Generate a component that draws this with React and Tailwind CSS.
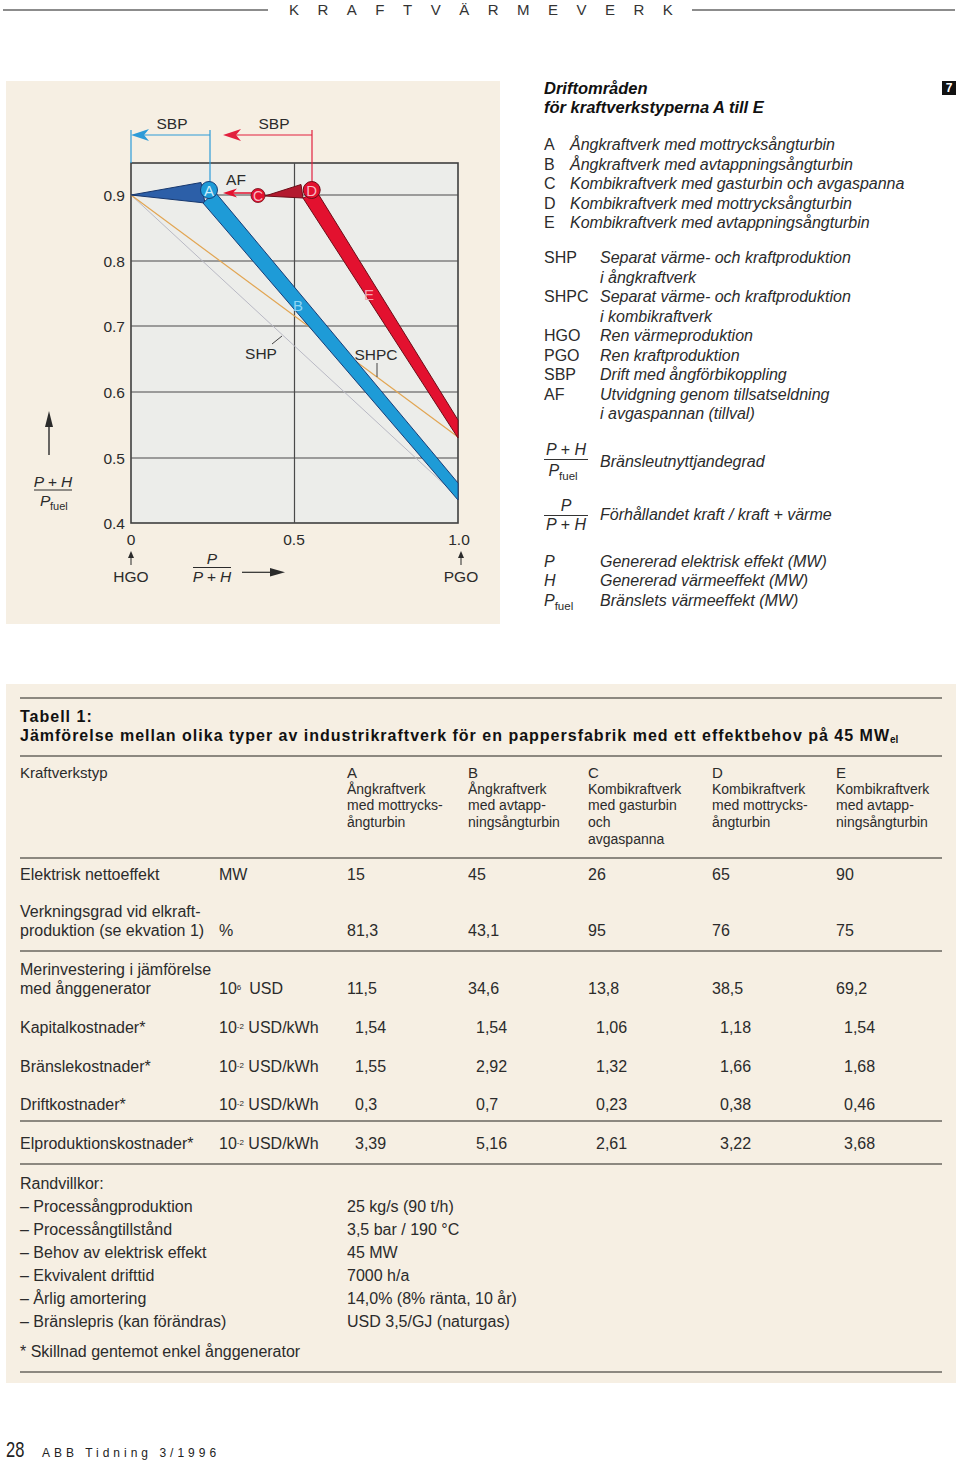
import React, { Fragment } from "react";

function Chart() {
  const dark = "#2b2b2b";
  return (
    <svg width="494" height="543" viewBox="6 81 494 543" className="block" fontFamily='"Liberation Sans", Arial, sans-serif'>
      <rect x="131" y="163" width="327" height="360" fill="#ecedea" stroke="#3f3f3f" strokeWidth="1.6" />
      {[195, 261, 326, 392, 458].map((y) => (
        <line key={y} x1="131" x2="458" y1={y} y2={y} stroke="#4a4a4a" strokeWidth="1.2" />
      ))}
      <line x1="294.5" x2="294.5" y1="163" y2="523" stroke="#4a4a4a" strokeWidth="1.2" />

      <line x1="131" y1="195" x2="458" y2="497" stroke="#b9b9c4" strokeWidth="1" />
      <line x1="131" y1="195" x2="458" y2="437" stroke="#e2a552" strokeWidth="1.2" />

      <g stroke="#2d9bd8" strokeWidth="1.2" fill="none">
        <line x1="131" y1="130" x2="131" y2="163" />
        <line x1="136" y1="135" x2="210" y2="135" />
        <line x1="210" y1="130" x2="210" y2="182" />
      </g>
      <path d="M131,135 L149,129 L144,135 L149,141 Z" fill="#2d9bd8" />
      <g stroke="#e2203e" strokeWidth="1.2" fill="none">
        <line x1="228" y1="135" x2="312" y2="135" />
        <line x1="312" y1="130" x2="312" y2="182" />
      </g>
      <path d="M223,135 L241,129 L236,135 L241,141 Z" fill="#e2203e" />
      <text x="172" y="129" textAnchor="middle" fontSize="15.5" fill={dark}>SBP</text>
      <text x="274" y="129" textAnchor="middle" fontSize="15.5" fill={dark}>SBP</text>

      <polygon points="131,195 201,182.5 205,203" fill="#2c5fa8" stroke="#17386e" strokeWidth="1" strokeLinejoin="round" />
      <polygon points="203,203 215,192 458,483 458,500" fill="#1e9bd7" stroke="#183e78" strokeWidth="1" />
      <circle cx="209" cy="190" r="8.5" fill="#1e9bd7" stroke="#183e78" strokeWidth="1" />
      <text x="209" y="195.5" textAnchor="middle" fontSize="15" fill="#cdeefb">A</text>
      <text x="298" y="310.5" textAnchor="middle" fontSize="15" fill="#8fd6f5">B</text>

      <polygon points="265,196 301,184.5 303,198" fill="#b3192e" stroke="#6d0c17" strokeWidth="1" strokeLinejoin="round" />
      <polygon points="303,198 317,192 458,420 458,438" fill="#e3112f" stroke="#6d0c17" strokeWidth="1" />
      <circle cx="311.7" cy="190" r="8.5" fill="#e3112f" stroke="#6d0c17" strokeWidth="1" />
      <text x="311.7" y="195.5" textAnchor="middle" fontSize="15" fill="#f8b9c3">D</text>
      <text x="369" y="299.5" textAnchor="middle" fontSize="15" fill="#f5a5b2">E</text>

      <line x1="229" y1="193" x2="252" y2="193" stroke="#e3112f" strokeWidth="1.5" />
      <path d="M223,193 L237,188.5 L233,193 L237,197.5 Z" fill="#e3112f" />
      <circle cx="258" cy="195.5" r="7" fill="#e3112f" stroke="#6d0c17" strokeWidth="0.8" />
      <text x="258" y="200.5" textAnchor="middle" fontSize="14" fill="#f8b9c3">C</text>
      <text x="236" y="184.5" textAnchor="middle" fontSize="15.5" fill={dark}>AF</text>

      <line x1="272" y1="344" x2="282" y2="336" stroke="#444" strokeWidth="1" />
      <text x="261" y="358.5" textAnchor="middle" fontSize="15.5" fill={dark}>SHP</text>
      <line x1="377" y1="363" x2="377" y2="377" stroke="#444" strokeWidth="1" />
      <text x="376" y="359.5" textAnchor="middle" fontSize="15.5" fill={dark}>SHPC</text>

      {[
        ["0.9", 195],
        ["0.8", 261],
        ["0.7", 326],
        ["0.6", 392],
        ["0.5", 458],
        ["0.4", 523],
      ].map(([t, y]) => (
        <text key={t} x="125" y={y + 5.5} textAnchor="end" fontSize="15.5" fill={dark}>{t}</text>
      ))}

      <text x="131" y="545" textAnchor="middle" fontSize="15.5" fill={dark}>0</text>
      <text x="294" y="545" textAnchor="middle" fontSize="15.5" fill={dark}>0.5</text>
      <text x="459" y="545" textAnchor="middle" fontSize="15.5" fill={dark}>1.0</text>
      <line x1="131" y1="557" x2="131" y2="565" stroke={dark} strokeWidth="1" />
      <path d="M131,551 L128,558 L134,558 Z" fill={dark} />
      <line x1="461" y1="557" x2="461" y2="565" stroke={dark} strokeWidth="1" />
      <path d="M461,551 L458,558 L464,558 Z" fill={dark} />
      <text x="131" y="582" textAnchor="middle" fontSize="15.5" fill={dark}>HGO</text>
      <text x="461" y="582" textAnchor="middle" fontSize="15.5" fill={dark}>PGO</text>

      <text x="212" y="563.5" textAnchor="middle" fontSize="15.5" fontStyle="italic" fill={dark}>P</text>
      <line x1="193" y1="567.5" x2="231" y2="567.5" stroke={dark} strokeWidth="1" />
      <text x="212" y="582" textAnchor="middle" fontSize="15.5" fontStyle="italic" fill={dark}>P + H</text>
      <line x1="242" y1="572.3" x2="272" y2="572.3" stroke={dark} strokeWidth="1.2" />
      <path d="M285,572.3 L270,568 L270,576.6 Z" fill={dark} />

      <line x1="49" y1="425" x2="49" y2="455" stroke={dark} strokeWidth="1.4" />
      <path d="M49,411 L45,427 L53,427 Z" fill={dark} />
      <text x="53" y="486.5" textAnchor="middle" fontSize="15.5" fontStyle="italic" fill={dark}>P + H</text>
      <line x1="34" y1="490" x2="72" y2="490" stroke={dark} strokeWidth="1" />
      <text x="40" y="506" fontSize="15.5" fontStyle="italic" fill={dark}>P</text>
      <text x="50" y="510" fontSize="11" fill={dark}>fuel</text>
    </svg>
  );
}

function Frac({ num, den, className = "" }) {
  return (
    <div className={"flex flex-col items-center w-[44px] " + className}>
      <div className="italic leading-[18px] whitespace-nowrap">{num}</div>
      <div className="w-full border-t border-[#333] whitespace-nowrap text-center">{den}</div>
    </div>
  );
}

function Pfuel() {
  return (
    <span className="whitespace-nowrap">
      <span className="italic">P</span>
      <span className="text-[11.5px] relative top-[4px]">fuel</span>
    </span>
  );
}

function Legend() {
  const types = [
    ["A", "Ångkraftverk med mottrycksångturbin"],
    ["B", "Ångkraftverk med avtappningsångturbin"],
    ["C", "Kombikraftverk med gasturbin och avgaspanna"],
    ["D", "Kombikraftverk med mottrycksångturbin"],
    ["E", "Kombikraftverk med avtappningsångturbin"],
  ];
  const abbr = [
    ["SHP", ["Separat värme- och kraftproduktion", "i ångkraftverk"]],
    ["SHPC", ["Separat värme- och kraftproduktion", "i kombikraftverk"]],
    ["HGO", ["Ren värmeproduktion"]],
    ["PGO", ["Ren kraftproduktion"]],
    ["SBP", ["Drift med ångförbikoppling"]],
    ["AF", ["Utvidgning genom tillsatseldning", "i avgaspannan (tillval)"]],
  ];
  return (
    <div className="ml-[44px] w-[412px] text-[16px] text-[#2b2b2b]">
      <div className="flex justify-between">
        <div className="font-bold italic text-[16.5px] leading-[19px] text-[#111]">
          Driftområden
          <br />
          för kraftverkstyperna A till E
        </div>
        <div className="mt-[2px] w-[14px] h-[14px] bg-[#111] text-white text-[12px] font-bold leading-[14px] text-center">7</div>
      </div>

      <div className="mt-[18px] grid grid-cols-[26px_1fr] leading-[19.5px]">
        {types.map(([k, v]) => (
          <Fragment key={k}>
            <div>{k}</div>
            <div className="italic">{v}</div>
          </Fragment>
        ))}
      </div>

      <div className="mt-[15.5px] grid grid-cols-[56px_1fr] leading-[19.5px]">
        {abbr.map(([k, v]) => (
          <Fragment key={k}>
            <div>{k}</div>
            <div className="italic">
              {v.map((l, i) => (
                <div key={i}>{l}</div>
              ))}
            </div>
          </Fragment>
        ))}
      </div>

      <div className="mt-[17px] flex items-center">
        <div className="w-[56px]">
          <Frac num="P + H" den={<div className="leading-[21px] pr-[6px]"><Pfuel /></div>} />
        </div>
        <div className="italic">Bränsleutnyttjandegrad</div>
      </div>

      <div className="mt-[14px] flex items-center">
        <div className="w-[56px]">
          <Frac num="P" den={<div className="italic leading-[18px]">P + H</div>} />
        </div>
        <div className="italic">Förhållandet kraft / kraft + värme</div>
      </div>

      <div className="mt-[18px] grid grid-cols-[56px_1fr] leading-[19.5px]">
        <div className="italic">P</div>
        <div className="italic">Genererad elektrisk effekt (MW)</div>
        <div className="italic">H</div>
        <div className="italic">Genererad värmeeffekt (MW)</div>
        <div><Pfuel /></div>
        <div className="italic">Bränslets värmeeffekt (MW)</div>
      </div>
    </div>
  );
}

function Rule({ className = "" }) {
  return <div className={"h-[2px] bg-[#8c8880] " + className} />;
}

const U2 = (
  <span className="whitespace-nowrap">
    10<sup className="text-[8px]">-2</sup> USD/kWh
  </span>
);

function Row({ label, unit, vals, mt, shift }) {
  return (
    <div className={"grid grid-cols-[199px_128px_121px_120px_124px_124px_1fr] items-end leading-[19px] " + mt}>
      <div className="whitespace-nowrap">{label}</div>
      <div>{unit}</div>
      {vals.map((v, i) => (
        <div key={i} className={shift ? "pl-[8px]" : ""}>{v}</div>
      ))}
    </div>
  );
}

function Table() {
  const heads = [
    ["A", ["Ångkraftverk", "med mottrycks-", "ångturbin"]],
    ["B", ["Ångkraftverk", "med avtapp-", "ningsångturbin"]],
    ["C", ["Kombikraftverk", "med gasturbin", "och", "avgaspanna"]],
    ["D", ["Kombikraftverk", "med mottrycks-", "ångturbin"]],
    ["E", ["Kombikraftverk", "med avtapp-", "ningsångturbin"]],
  ];
  const cond = [
    ["– Processångproduktion", "25 kg/s (90 t/h)"],
    ["– Processångtillstånd", "3,5 bar / 190 °C"],
    ["– Behov av elektrisk effekt", "45 MW"],
    ["– Ekvivalent drifttid", "7000 h/a"],
    ["– Årlig amortering", "14,0% (8% ränta, 10 år)"],
    ["– Bränslepris (kan förändras)", "USD 3,5/GJ (naturgas)"],
  ];
  return (
    <div className="mt-[60px] ml-[6px] w-[950px] bg-[#f6efe3] px-[14px] pt-[13px] pb-[10px] text-[16px] text-[#2b2b2b]">
      <Rule />
      <div className="mt-[7.5px] font-bold text-[16px] leading-[19px] tracking-[1px] text-[#111] whitespace-nowrap">
        Tabell 1:
        <br />
        Jämförelse mellan olika typer av industrikraftverk för en pappersfabrik med ett effektbehov på 45 MW
        <sub className="text-[10px] tracking-normal">el</sub>
      </div>
      <Rule className="mt-[10.5px]" />

      <div className="mt-[6.5px] grid grid-cols-[327px_121px_120px_124px_124px_1fr]">
        <div className="leading-[17px] text-[15px]">Kraftverkstyp</div>
        {heads.map(([k, lines]) => (
          <div key={k}>
            <div className="leading-[17px] text-[15px]">{k}</div>
            <div className="text-[14px] leading-[16.7px]">
              {lines.map((l, i) => (
                <div key={i}>{l}</div>
              ))}
            </div>
          </div>
        ))}
      </div>
      <Rule className="mt-[9.5px]" />

      <Row mt="mt-[6.5px]" label="Elektrisk nettoeffekt" unit="MW" vals={["15", "45", "26", "65", "90"]} />
      <Row
        mt="mt-[18px]"
        label={<>Verkningsgrad vid elkraft-<br />produktion (se ekvation 1)</>}
        unit="%"
        vals={["81,3", "43,1", "95", "76", "75"]}
      />
      <Rule className="mt-[9.5px]" />
      <Row
        mt="mt-[8.5px]"
        label={<>Merinvestering i jämförelse<br />med ånggenerator</>}
        unit={<span className="whitespace-nowrap">10<sup className="text-[8px]">6</sup><span className="ml-[8px]">USD</span></span>}
        vals={["11,5", "34,6", "13,8", "38,5", "69,2"]}
      />
      <Row mt="mt-[20px]" shift label="Kapitalkostnader*" unit={U2} vals={["1,54", "1,54", "1,06", "1,18", "1,54"]} />
      <Row mt="mt-[20px]" shift label="Bränslekostnader*" unit={U2} vals={["1,55", "2,92", "1,32", "1,66", "1,68"]} />
      <Row mt="mt-[19px]" shift label="Driftkostnader*" unit={U2} vals={["0,3", "0,7", "0,23", "0,38", "0,46"]} />
      <Rule className="mt-[5.5px]" />
      <Row mt="mt-[12.5px]" shift label="Elproduktionskostnader*" unit={U2} vals={["3,39", "5,16", "2,61", "3,22", "3,68"]} />
      <Rule className="mt-[9.5px]" />

      <div className="mt-[7px] grid grid-cols-[327px_1fr] leading-[23px]">
        <div className="col-span-2">Randvillkor:</div>
        {cond.map(([a, b]) => (
          <Fragment key={a}>
            <div>{a}</div>
            <div>{b}</div>
          </Fragment>
        ))}
      </div>
      <div className="mt-[7px] leading-[23px]">* Skillnad gentemot enkel ånggenerator</div>
      <Rule className="mt-[8.5px]" />
    </div>
  );
}

export default function App() {
  return (
    <div className="w-[960px] h-[1462px] bg-white font-['Liberation_Sans',Arial,sans-serif] text-[#2b2b2b] overflow-hidden">
      <div className="h-[20px] flex items-center">
        <div className="ml-[3px] w-[265px] h-[2px] bg-[#8c8c8c]" />
        <div className="ml-[21px] w-[403px] text-[15px] tracking-[18.5px] text-[#333] leading-[20px] whitespace-nowrap">
          KRAFTVÄRMEVERK
        </div>
        <div className="w-[263px] h-[2px] bg-[#8c8c8c]" />
      </div>

      <div className="flex mt-[59px]">
        <div className="ml-[6px] mt-[2px] w-[494px] h-[543px] bg-[#f6efe3]">
          <Chart />
        </div>
        <Legend />
      </div>

      <Table />

      <div className="mt-[56px] flex items-baseline leading-[22px]">
        <div className="ml-[6px] w-[36px]">
          <span className="inline-block origin-left scale-x-[0.75] text-[22px] text-[#222]">28</span>
        </div>
        <div className="text-[12px] tracking-[4px] text-[#222]">ABB Tidning 3/1996</div>
      </div>
    </div>
  );
}
